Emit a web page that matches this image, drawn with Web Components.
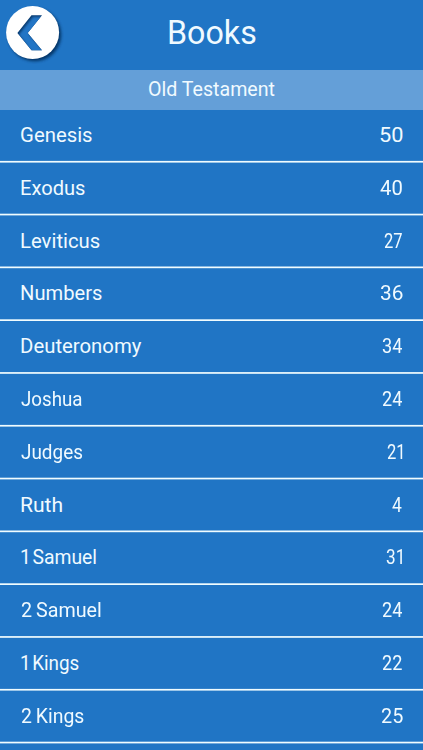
<!DOCTYPE html>
<html lang="en"><head><meta charset="utf-8"><title>Books</title>
<style>body{margin:0;background:#2075c5;overflow:hidden}</style></head>
<body><books-page></books-page>
<script>
// A label whose glyphs are condensed or widened to an exact ink width.
class FitText extends HTMLElement{
 connectedCallback(){
  const size=+this.getAttribute('size'),w=+this.getAttribute('w'),ws=+(this.getAttribute('ws')||0);
  const ctx=document.createElement('canvas').getContext('2d');
  ctx.font=size+'px Roboto';
  const m=ctx.measureText(this.textContent);
  const s=w/(m.actualBoundingBoxLeft+m.actualBoundingBoxRight+ws);
  this.attachShadow({mode:'open'}).innerHTML=`<style>
  :host{display:block;width:${w}px;height:${size*1.2}px;white-space:nowrap}
  span{display:inline-block;font:${size}px/${size*1.2}px Roboto,sans-serif;word-spacing:${ws}px;
  transform-origin:0 50%;transform:translateX(${m.actualBoundingBoxLeft*s}px) scaleX(${s})}</style><span><slot></slot></span>`;
 }
}
class BackButton extends HTMLElement{
 constructor(){super();this.attachShadow({mode:'open'}).innerHTML=`<style>:host{display:block;width:70px;height:70px}svg{display:block}</style>
 <svg width="70" height="70" viewBox="0 0 70 70">
 <defs><filter id="d" x="-20%" y="-20%" width="150%" height="150%"><feGaussianBlur stdDeviation="1.8"/></filter>
 <filter id="b" x="-20%" y="-20%" width="150%" height="150%"><feGaussianBlur stdDeviation=".8"/></filter>
 <clipPath id="c"><path d="M31.5 15.3H42L27.7 33 42 50.2H31.5L17.4 33Z"/></clipPath></defs>
 <circle cx="34.7" cy="34.7" r="26.5" fill="#062c58" opacity=".85" filter="url(#d)"/>
 <circle cx="32.6" cy="32.4" r="26.5" fill="#fff"/>
 <g clip-path="url(#c)"><path d="M10 10H50V55H10Z" fill="#0b3c70"/>
 <path d="M33 16.7H46L29.2 34.4 46 54H33L18.9 34.4Z" fill="#2075c5" filter="url(#b)"/></g></svg>`}
}
class BookRow extends HTMLElement{
 connectedCallback(){
  const a=n=>this.getAttribute(n);
  this.attachShadow({mode:'open'}).innerHTML=`<style>
  :host{display:flex;justify-content:space-between;align-items:flex-start;box-sizing:border-box;
  height:${a('h')}px;padding:${a('pad')}px 20.8px 0 20.7px;
  background:linear-gradient(${a('c0')} 0 1px,${a('c1')} 1px 2px,${a('c2')} 2px 3px) 0 100%/100% 3px no-repeat}
  </style><fit-text size="21" w="${a('w')}" ws="${a('ws')}">${a('name')}</fit-text><fit-text size="21" w="${a('nw')}">${a('n')}</fit-text>`;
 }
}
class BooksPage extends HTMLElement{
 constructor(){super();
  const data=[['Genesis',69.8,50,22.6],['Exodus',62.7,40,22],['Leviticus',77.5,27,18],['Numbers',79.6,36,22.6],['Deuteronomy',119.5,34,20.5],['Joshua',60.3,24,20.5],['Judges',60.3,21,15.6],['Ruth',40.5,4,10],['1 Samuel',75,31,16.2],['2 Samuel',79.8,24,20.5],['1 Kings',57.5,22,20.5],['2 Kings',62.6,25,21.5]];
  let top=110,rows='';
  data.forEach(([name,w,n,nw],i)=>{
   const c=161.75+i*52.8,end=Math.floor(c)+2,start=end-3;
   // Coverage of a 1.7px divider over each of its three pixel rows.
   const col=k=>{const p=start+k,v=Math.max(0,Math.min(p+1,c+.85)-Math.max(p,c-.85));return `rgba(240,252,255,${v.toFixed(2)})`};
   const pad=Math.round(c-26.8+.05)-12-top;
   rows+=`<book-row name="${name}" w="${w}" n="${n}" nw="${nw}" h="${end-top}" pad="${pad}" ws="${name[0]==='1'?-3.6:-1}" c0="${col(0)}" c1="${col(1)}" c2="${col(2)}"></book-row>`;
   top=end;
  });
  this.attachShadow({mode:'open'}).innerHTML=`<style>
  :host{display:block;width:423px;height:750px;overflow:hidden;background:#2075c5;color:#f0faff}
  header{display:grid;grid-template-columns:70px 1fr 70px;height:70px}
  header fit-text{margin:14px auto 0;padding-left:1px}
  h2{margin:0;height:40px;box-sizing:border-box;padding:5px 0 0 1px;display:flex;justify-content:center;background:#649fd8;font-weight:400}
  </style><header><back-button></back-button><fit-text size="32.5" w="87">Books</fit-text></header>
  <h2><fit-text size="21" w="126.5">Old Testament</fit-text></h2><main>${rows}</main>`}
}
customElements.define('fit-text',FitText);customElements.define('back-button',BackButton);
customElements.define('book-row',BookRow);customElements.define('books-page',BooksPage);
</script></body></html>
